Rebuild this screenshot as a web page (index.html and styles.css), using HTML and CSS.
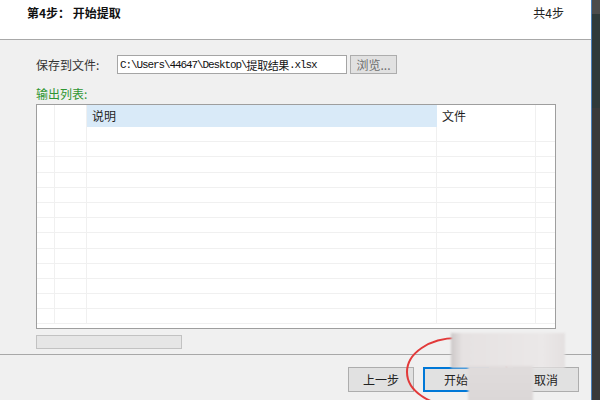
FILE: index.html
```html
<!DOCTYPE html>
<html lang="zh-CN">
<head>
<meta charset="utf-8">
<title>第4步 开始提取</title>
<link rel="stylesheet" href="styles.css">
</head>
<body>
<div class="screen">
  <div class="dialog">
    <div class="header">
      <div class="step-title">第4步： 开始提取</div>
      <div class="step-count">共4步</div>
    </div>
    <div class="content">
      <div class="file-row">
        <span class="field-label">保存到文件:</span>
        <div class="path-box"><span class="asc">C:\Users\44647\Desktop\</span><span class="cjk">提取结果</span><span class="asc">.xlsx</span></div>
        <button class="btn browse">浏览...</button>
      </div>
      <div class="out-label">输出列表:</div>
      <div class="list">
        <div class="row head">
          <div class="cell c1"></div>
          <div class="cell c2"></div>
          <div class="cell c3 sel">说明</div>
          <div class="cell c4">文件</div>
          <div class="cell c5"></div>
        </div>
        <div class="row"><div class="cell c1"></div><div class="cell c2"></div><div class="cell c3"></div><div class="cell c4"></div><div class="cell c5"></div></div>
        <div class="row"><div class="cell c1"></div><div class="cell c2"></div><div class="cell c3"></div><div class="cell c4"></div><div class="cell c5"></div></div>
        <div class="row"><div class="cell c1"></div><div class="cell c2"></div><div class="cell c3"></div><div class="cell c4"></div><div class="cell c5"></div></div>
        <div class="row"><div class="cell c1"></div><div class="cell c2"></div><div class="cell c3"></div><div class="cell c4"></div><div class="cell c5"></div></div>
        <div class="row"><div class="cell c1"></div><div class="cell c2"></div><div class="cell c3"></div><div class="cell c4"></div><div class="cell c5"></div></div>
        <div class="row"><div class="cell c1"></div><div class="cell c2"></div><div class="cell c3"></div><div class="cell c4"></div><div class="cell c5"></div></div>
        <div class="row"><div class="cell c1"></div><div class="cell c2"></div><div class="cell c3"></div><div class="cell c4"></div><div class="cell c5"></div></div>
        <div class="row"><div class="cell c1"></div><div class="cell c2"></div><div class="cell c3"></div><div class="cell c4"></div><div class="cell c5"></div></div>
        <div class="row"><div class="cell c1"></div><div class="cell c2"></div><div class="cell c3"></div><div class="cell c4"></div><div class="cell c5"></div></div>
        <div class="row"><div class="cell c1"></div><div class="cell c2"></div><div class="cell c3"></div><div class="cell c4"></div><div class="cell c5"></div></div>
        <div class="row"><div class="cell c1"></div><div class="cell c2"></div><div class="cell c3"></div><div class="cell c4"></div><div class="cell c5"></div></div>
        <div class="row"><div class="cell c1"></div><div class="cell c2"></div><div class="cell c3"></div><div class="cell c4"></div><div class="cell c5"></div></div>
        <div class="row"><div class="cell c1"></div><div class="cell c2"></div><div class="cell c3"></div><div class="cell c4"></div><div class="cell c5"></div></div>
      </div>
      <div class="progress"></div>
    </div>
    <div class="footer">
      <button class="btn nav">上一步</button>
      <button class="btn nav focus">开始</button>
      <button class="btn nav cancel">取消</button>
    </div>
  </div>
  <div class="edge"></div>

  <svg class="mark" width="600" height="400" viewBox="0 0 600 400">
    <ellipse cx="457" cy="372" rx="50" ry="34" fill="none" stroke="#e23a3a" stroke-width="2"/>
  </svg>
  <div class="blur blur-a"></div>
  <div class="blur blur-b"></div>
</div>
</body>
</html>
```

FILE: styles.css
```css
html, body {
  margin: 0;
  padding: 0;
}
body {
  font-family: "Noto Sans CJK SC", "Liberation Sans", sans-serif;
  font-size: 12px;
  color: #1e1e1e;
  background: #f0f0f0;
}
.screen {
  position: relative;
  display: flex;
  width: 600px;
  height: 400px;
  overflow: hidden;
}
.dialog {
  width: 591px;
  display: flex;
  flex-direction: column;
  background: #f0f0f0;
}
.edge {
  width: 8px;
  border-left: 1px solid #4a80b8;
  background: linear-gradient(#4c4c4c 0 14px, #2f3a3a 14px 108px, #3a3a3a 108px);
}
.header {
  box-sizing: border-box;
  height: 40px;
  background: #fff;
  border-bottom: 1px solid #a8a8a8;
  display: flex;
  justify-content: space-between;
  align-items: flex-start;
  padding: 5px 27px 0 27px;
  line-height: 16px;
}
.step-title {
  font-weight: 700;
  color: #111;
}
.step-count {
  color: #222;
}
.content {
  display: flex;
  flex-direction: column;
  padding: 15px 0 0 36px;
}
.file-row {
  display: flex;
  align-items: center;
  height: 19px;
}
.field-label {
  width: 81px;
  color: #333;
  line-height: 16px;
}
.path-box {
  box-sizing: border-box;
  width: 230px;
  height: 19px;
  background: #fff;
  border: 1px solid #a5a5a5;
  padding-left: 2px;
  display: flex;
  align-items: center;
  white-space: nowrap;
  overflow: hidden;
  font-size: 11px;
  color: #111;
}
.asc {
  font-family: "Liberation Mono", monospace;
  letter-spacing: -1.1px;
}
.cjk {
  font-family: "Noto Sans CJK SC", sans-serif;
  letter-spacing: -0.4px;
}
.btn {
  box-sizing: border-box;
  margin: 0;
  padding: 0;
  font-family: "Noto Sans CJK SC", sans-serif;
  font-size: 12px;
  background: #e1e1e1;
  border: 1px solid #adadad;
  color: #222;
}
.browse {
  width: 47px;
  height: 19px;
  margin-left: 3px;
  color: #6e6e6e;
  line-height: 16px;
}
.out-label {
  margin-top: 12px;
  line-height: 16px;
  color: #2f9632;
}
.list {
  box-sizing: border-box;
  margin-top: 2px;
  width: 520px;
  height: 225px;
  background: #fff;
  border: 1px solid #9e9e9e;
  overflow: hidden;
}
.row {
  display: flex;
  height: 15.2px;
  border-bottom: 1px solid #f0f0f0;
  box-sizing: border-box;
}
.row.head {
  height: 22px;
  border-bottom: none;
  line-height: 22px;
}
.cell {
  box-sizing: border-box;
  border-right: 1px solid #f0f0f0;
}
.c1 { width: 18px; }
.c2 { width: 32px; }
.c3 { width: 350px; padding-left: 5px; }
.c4 { width: 99px; padding-left: 5px; }
.c5 { flex: 1; border-right: none; }
.sel {
  background: #d9eaf8;
  border-right-color: #d9eaf8;
}
.progress {
  box-sizing: border-box;
  margin-top: 6px;
  width: 146px;
  height: 14px;
  background: #e6e6e6;
  border: 1px solid #c2c2c2;
}
.footer {
  flex: 1;
  margin-top: 5px;
  border-top: 1px solid #a8a8a8;
  display: flex;
  justify-content: flex-end;
  align-items: flex-start;
  padding: 12px 12px 0 0;
}
.nav {
  width: 66px;
  height: 25px;
  margin-left: 9px;
}
.focus {
  border-color: #0078d7;
  box-shadow: inset 0 0 0 1px #0078d7;
}
.cancel {
  margin-left: 24px;
}
.mark {
  position: absolute;
  left: 0;
  top: 0;
  pointer-events: none;
}
.blur {
  position: absolute;
  filter: blur(1px);
}
.blur-a {
  left: 451px;
  top: 333px;
  width: 114px;
  height: 35px;
  background: linear-gradient(90deg, #cdc8c8, #e6e2e2 10%, #ebe8e8 80%, #e4e0e0);
}
.blur-b {
  left: 468px;
  top: 366px;
  width: 65px;
  height: 36px;
  background: linear-gradient(180deg, #e0dcdc, #dbd7d7);
}
```
